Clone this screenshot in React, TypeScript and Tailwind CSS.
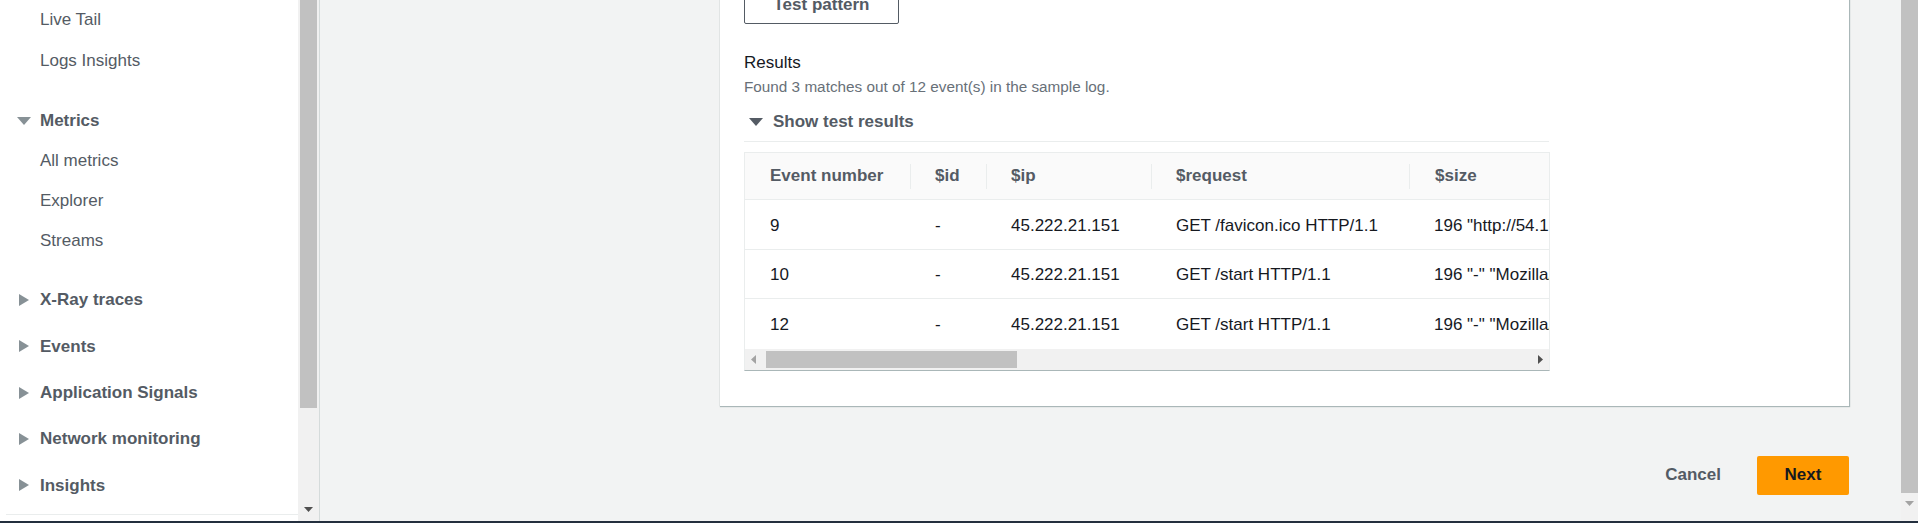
import React from "react";

const font = { fontFamily: '"Liberation Sans", Arial, sans-serif' };

function DownTri({ cls }: { cls: string }) {
  return (
    <svg width="14" height="8" viewBox="0 0 14 8" className={cls}>
      <polygon points="0,0 14,0 7,8" fill="currentColor" />
    </svg>
  );
}
function RightTri({ cls }: { cls: string }) {
  return (
    <svg width="10" height="12" viewBox="0 0 10 12" className={cls}>
      <polygon points="0,0 10,6 0,12" fill="currentColor" />
    </svg>
  );
}

function SubItem({ label }: { label: string }) {
  return (
    <div className="h-[40px] flex items-center pl-[40px] text-[17px] text-[#545b64]">{label}</div>
  );
}

function Group({ label }: { label: string }) {
  return (
    <div className="h-[46.3px] flex items-center text-[17px] font-bold text-[#545b64]">
      <div className="w-[40px] pl-[19px] flex items-center">
        <RightTri cls="text-[#879196]" />
      </div>
      <span>{label}</span>
    </div>
  );
}

const cols = [
  { name: "Event number", w: "w-[165px]", pl: "pl-[25px]" },
  { name: "$id", w: "w-[76px]", pl: "pl-[24px]" },
  { name: "$ip", w: "w-[165px]", pl: "pl-[24px]" },
  { name: "$request", w: "w-[258px]", pl: "pl-[24px]" },
  { name: "$size", w: "w-[400px]", pl: "pl-[25px]" },
];

const rows = [
  ["9", "-", "45.222.21.151", "GET /favicon.ico HTTP/1.1", '196 "http://54.172.18.20/" "Mozilla/5.0"'],
  ["10", "-", "45.222.21.151", "GET /start HTTP/1.1", '196 "-" "Mozilla/5.0 (Windows NT 10.0)"'],
  ["12", "-", "45.222.21.151", "GET /start HTTP/1.1", '196 "-" "Mozilla/5.0 (Windows NT 10.0)"'],
];

export default function App() {
  return (
    <div style={font} className="w-[1918px] h-[523px] flex flex-col overflow-hidden bg-[#f2f3f3]">
      <div className="flex flex-1 min-h-0">
        {/* Sidebar */}
        <div className="w-[298px] bg-white flex flex-col">
          <SubItem label="Live Tail" />
          <div className="h-[1px]" />
          <SubItem label="Logs Insights" />
          <div className="h-[20px]" />
          <div className="h-[40px] flex items-center text-[17px] font-bold text-[#545b64]">
            <div className="w-[40px] pl-[17px] flex items-center">
              <DownTri cls="text-[#879196]" />
            </div>
            <span>Metrics</span>
          </div>
          <SubItem label="All metrics" />
          <SubItem label="Explorer" />
          <SubItem label="Streams" />
          <div className="h-[16px]" />
          <Group label="X-Ray traces" />
          <Group label="Events" />
          <Group label="Application Signals" />
          <Group label="Network monitoring" />
          <Group label="Insights" />
          <div className="mt-[6px] ml-[6px] h-px bg-[#eaeded]" />
        </div>
        {/* Sidebar scrollbar */}
        <div className="w-[21px] bg-[#f1f1f1] flex flex-col items-center">
          <div className="w-[17px] h-[408px] bg-[#c1c1c1]" />
          <div className="flex-1" />
          <svg width="9" height="5" viewBox="0 0 9 5" className="mb-[9px]">
            <polygon points="0,0 9,0 4.5,5" fill="#505050" />
          </svg>
        </div>
        <div className="w-px bg-[#d5dbdb]" />
        {/* Main */}
        <div className="flex-1 flex flex-col pl-[399px] pr-[52px]">
          <div className="bg-white border-l border-[#e1e4e4] shadow-[1px_1px_1px_0_#aab7b8] -mt-[14px] pl-[24px] pr-[24px] pb-[35px]">
            <button className="h-[38px] w-[155px] border border-[#545b64] rounded-[2px] text-[17px] font-bold text-[#545b64] bg-white">
              Test pattern
            </button>
            <div className="mt-[28px] text-[17px] leading-[22px] text-[#16191f]">Results</div>
            <div className="mt-[3px] text-[15.3px] leading-[20px] text-[#687078]">
              Found 3 matches out of 12 event(s) in the sample log.
            </div>
            <div className="mt-[14px] h-[22px] flex items-center text-[17px] font-bold text-[#545b64]">
              <div className="w-[29px] pl-[5px] flex items-center">
                <DownTri cls="text-[#545b64]" />
              </div>
              <span>Show test results</span>
            </div>
            <div className="mt-[8px] w-[805px] h-px bg-[#eaeded]" />
            <div className="mt-[10px] w-[806px] border border-[#eaeded] border-b-[#aab7b8] overflow-hidden">
              <div className="flex h-[47px] bg-[#fafafa] border-b border-[#eaeded] items-center text-[17px] font-bold text-[#545b64] whitespace-nowrap">
                {cols.map((c, i) => (
                  <div key={c.name} className={`${c.w} shrink-0 h-[25px] flex items-center ${c.pl} ${i > 0 ? "border-l border-[#eaeded]" : ""}`}>
                    {c.name}
                  </div>
                ))}
              </div>
              {rows.map((r, ri) => (
                <div key={ri} className={`flex h-[49.5px] pt-[2px] items-center text-[17px] text-[#16191f] whitespace-nowrap ${ri < 2 ? "border-b border-[#eaeded]" : ""}`}>
                  {r.map((v, i) => (
                    <div key={i} className={`${cols[i].w} shrink-0 pl-[25px]`}>
                      {v}
                    </div>
                  ))}
                </div>
              ))}
              <div className="h-[21px] bg-[#f1f1f1] flex items-center">
                <svg width="5" height="9" viewBox="0 0 5 9" className="ml-[6px]">
                  <polygon points="5,0 5,9 0,4.5" fill="#a3a3a3" />
                </svg>
                <div className="ml-[10px] w-[251px] h-[17px] bg-[#c1c1c1]" />
                <div className="flex-1" />
                <svg width="5" height="9" viewBox="0 0 5 9" className="mr-[6px]">
                  <polygon points="0,0 5,4.5 0,9" fill="#505050" />
                </svg>
              </div>
            </div>
          </div>
          <div className="mt-[50px] flex justify-end items-center gap-[36px]">
            <span className="text-[17px] font-bold text-[#545b64]">Cancel</span>
            <button className="h-[39px] w-[92px] bg-[#ff9900] rounded-[2px] text-[17px] font-bold text-[#16191f]">
              Next
            </button>
          </div>
        </div>
        {/* Right scrollbar */}
        <div className="w-[17px] bg-[#f1f1f1] flex flex-col items-center">
          <div className="w-[17px] h-[493px] bg-[#c1c1c1]" />
          <svg width="9" height="5" viewBox="0 0 9 5" className="mt-[8px]">
            <polygon points="0,0 9,0 4.5,5" fill="#a3a3a3" />
          </svg>
        </div>
      </div>
      <div className="h-[2px] bg-[#232f3e]" />
    </div>
  );
}
